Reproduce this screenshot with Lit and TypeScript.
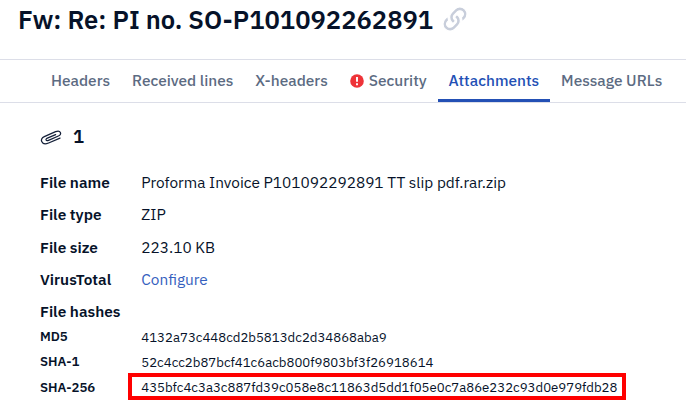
import { LitElement, html, css } from "lit";
import { customElement } from "lit/decorators.js";

@customElement("app-root")
class AppRoot extends LitElement {
  static styles = css`
    :host {
      display: block;
      height: 418px;
      overflow: hidden;
      background: #fff;
      color: #061229;
      font: 15.4px/30px "IBM Plex Sans", "Noto Sans", sans-serif;
      white-space: nowrap;
    }
    header {
      display: flex;
      box-sizing: border-box;
      height: 59px;
      padding-left: 18px;
      gap: 9.5px;
    }
    h1 { margin: 0; font-size: 25.55px; font-weight: 600; line-height: 39px; height: 39px; }
    .link { width: 24px; height: 24px; margin-top: 7px; color: #c8cedb; }
    nav {
      display: flex;
      box-sizing: border-box;
      height: 44px;
      padding-left: 40px;
      border-top: 1px solid #dcdee8;
      border-bottom: 1px solid #dcdee8;
      line-height: 41px;
      font-weight: 500;
      color: #5c6b82;
    }
    .tab { display: flex; box-sizing: border-box; height: 42px; padding: 0 10.9px 0 11px; }
    .active { color: #2350b5; border-bottom: 3px solid #2350b5; }
    .alert { width: 14px; height: 14px; margin: 14px 5px 0 0; }
    .count { display: flex; height: 64px; padding-left: 40px; font-size: 18.5px; font-weight: 600; line-height: 67px; }
    .clip { width: 23px; height: 20px; margin: 25px 10px 0 0; }
    dl {
      display: grid;
      grid-template-columns: 101.3px 1fr;
      grid-template-rows: 32px 33px 32px 32px 28px 25px 25px 27px;
      margin: 0;
      padding-left: 40px;
    }
    dt { font-weight: 600; }
    dd { margin: 0; }
    .configure { color: #3560be; }
    .small { font-size: 13.2px; line-height: 25px; }
    .low { padding-top: 1px; }
    .marked {
      box-sizing: border-box;
      width: 498px;
      height: 27px;
      margin: -1px 0 0 -13.3px;
      padding-left: 9.3px;
      border: 4px solid #f00;
      line-height: 21px;
    }
  `;

  render() {
    return html`
      <header>
        <h1>Fw: Re: PI no. SO-P101092262891</h1>
        <svg class="link" viewBox="0 0 512 512">
          <path fill="currentColor" stroke="#fff" stroke-width="26" d="M326.612 185.391c59.747 59.809 58.927 155.698.36 214.59-.11.12-.24.25-.36.37l-67.2 67.2c-59.27 59.27-155.699 59.262-214.96 0-59.27-59.26-59.27-155.7 0-214.96l37.106-37.106c9.84-9.84 26.786-3.3 27.294 10.606.648 17.722 3.826 35.527 9.69 52.721 1.986 5.822.567 12.262-3.783 16.612l-13.087 13.087c-28.026 28.026-28.905 73.66-1.155 101.96 28.024 28.579 74.086 28.749 102.325.51l67.2-67.19c28.191-28.191 28.073-73.757 0-101.83-3.701-3.694-7.429-6.564-10.341-8.569a16.037 16.037 0 0 1-6.947-12.606c-.396-10.567 3.348-21.456 11.698-29.806l21.054-21.055c5.521-5.521 14.182-6.199 20.584-1.731a152.482 152.482 0 0 1 20.522 17.197zM467.547 44.449c-59.261-59.262-155.69-59.27-214.96 0l-67.2 67.2c-.12.12-.25.25-.36.37-58.566 58.892-59.387 154.781.36 214.59a152.454 152.454 0 0 0 20.521 17.196c6.402 4.468 15.064 3.789 20.584-1.731l21.054-21.055c8.35-8.35 12.094-19.239 11.698-29.806a16.037 16.037 0 0 0-6.947-12.606c-2.912-2.005-6.64-4.875-10.341-8.569-28.073-28.073-28.191-73.639 0-101.83l67.2-67.19c28.239-28.239 74.3-28.069 102.325.51 27.75 28.3 26.872 73.934-1.155 101.96l-13.087 13.087c-4.35 4.35-5.769 10.79-3.783 16.612 5.864 17.194 9.042 34.999 9.69 52.721.509 13.906 17.454 20.446 27.294 10.606l37.106-37.106c59.271-59.259 59.271-155.699.001-214.959z"/>
        </svg>
      </header>
      <nav>
        <div class="tab">Headers</div>
        <div class="tab">Received lines</div>
        <div class="tab">X-headers</div>
        <div class="tab">
          <svg class="alert" viewBox="0 0 14 14">
            <circle cx="7" cy="7" r="6.8" fill="#ee3338" />
            <path d="M7 3v4.7M7 9.2v2" stroke="#fff" stroke-width="1.9" fill="none" />
          </svg>
          Security
        </div>
        <div class="tab active">Attachments</div>
        <div class="tab">Message URLs</div>
      </nav>
      <div class="count">
        <svg class="clip" viewBox="0 0 23 20" fill="none" stroke="#15213a" stroke-width="1.3" stroke-linecap="round">
          <path d="M20 10.1 8.6 15C5.2 16.5 2.6 15.6 1.7 13.6 0.8 11.6 2 9.6 4.3 8.6L15.6 3.7C17.9 2.7 19.7 3.1 20.4 4.5 21 5.9 20.3 7.2 18.4 8L8.5 12.3C7.1 12.9 6.4 12.6 6.1 12 5.8 11.3 6.2 10.7 7.4 10.2L15.6 6.6" />
        </svg>
        1
      </div>
      <dl>
        <dt>File name</dt>
        <dd>Proforma Invoice P101092292891 TT slip pdf.rar.zip</dd>
        <dt>File type</dt>
        <dd>ZIP</dd>
        <dt>File size</dt>
        <dd>223.10 KB</dd>
        <dt>VirusTotal</dt>
        <dd class="configure">Configure</dd>
        <dt>File hashes</dt>
        <dd></dd>
        <dt class="small">MD5</dt>
        <dd class="small low">4132a73c448cd2b5813dc2d34868aba9</dd>
        <dt class="small">SHA-1</dt>
        <dd class="small low">52c4cc2b87bcf41c6acb800f9803bf3f26918614</dd>
        <dt class="small low">SHA-256</dt>
        <dd class="small marked">435bfc4c3a3c887fd39c058e8c11863d5dd1f05e0c7a86e232c93d0e979fdb28</dd>
      </dl>
    `;
  }
}
